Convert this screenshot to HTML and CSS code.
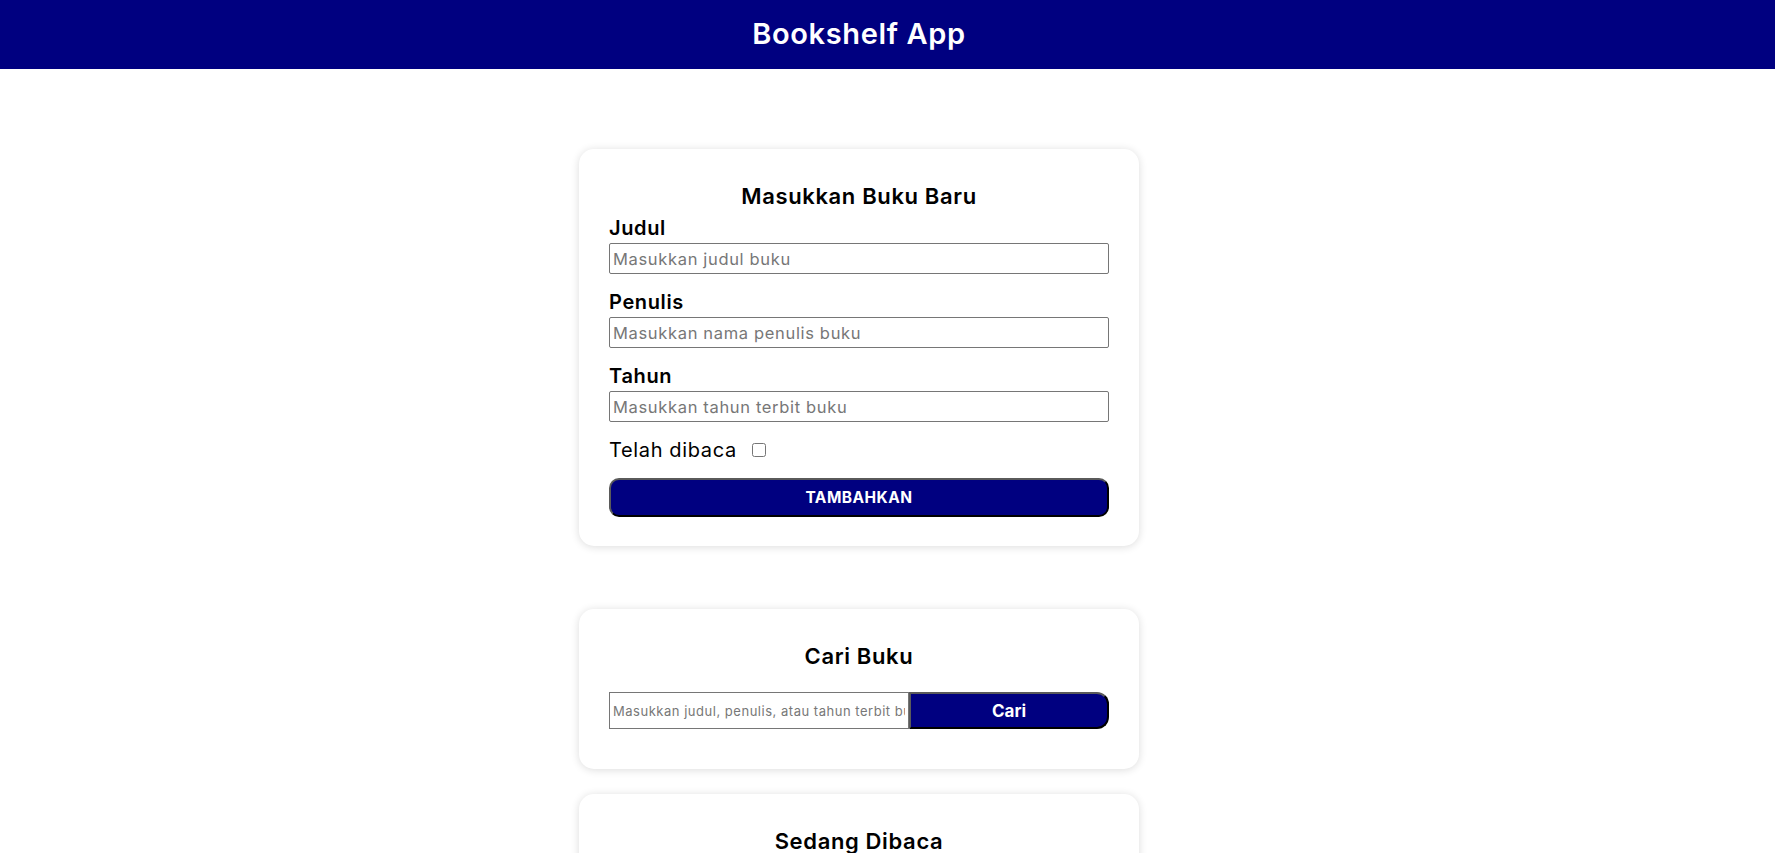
FILE: index.html
```html
<!DOCTYPE html>
<html lang="id">
<head>
<meta charset="UTF-8">
<meta name="viewport" content="width=device-width, initial-scale=1.0">
<title>Bookshelf App</title>
<link rel="stylesheet" href="styles.css">
</head>
<body>

<header class="app-header">
    <h1>Bookshelf App</h1>
</header>

<main class="app-main">
    <section class="card card-input">
        <h2 class="card-title">Masukkan Buku Baru</h2>
        <form class="book-form" id="inputBook">
            <div class="field">
                <label for="inputBookTitle">Judul</label>
                <input type="text" id="inputBookTitle" placeholder="Masukkan judul buku">
            </div>
            <div class="field">
                <label for="inputBookAuthor">Penulis</label>
                <input type="text" id="inputBookAuthor" placeholder="Masukkan nama penulis buku">
            </div>
            <div class="field">
                <label for="inputBookYear">Tahun</label>
                <input type="text" id="inputBookYear" placeholder="Masukkan tahun terbit buku">
            </div>
            <div class="field-check">
                <label for="inputBookIsComplete">Telah dibaca</label>
                <input type="checkbox" id="inputBookIsComplete">
            </div>
            <button type="submit" class="btn-submit">TAMBAHKAN</button>
        </form>
    </section>

    <section class="card card-search">
        <h2 class="card-title">Cari Buku</h2>
        <form class="search-form" id="searchBook">
            <input type="text" id="searchBookTitle" placeholder="Masukkan judul, penulis, atau tahun terbit buku">
            <button type="submit" class="btn-search">Cari</button>
        </form>
    </section>

    <section class="card card-shelf">
        <h2 class="card-title">Sedang Dibaca</h2>
        <div class="book-list" id="incompleteBookshelfList"></div>
    </section>
</main>

</body>
</html>
```

FILE: styles.css
```css
* {
    box-sizing: border-box;
}

body {
    margin: 0;
    font-family: Inter, "Open Sans", sans-serif;
    letter-spacing: 0.04em;
    color: #000;
    background-color: #fff;
}

.app-header {
    background-color: #000080;
    height: 69px;
    padding-right: 57px;
    text-align: center;
}

.app-header h1 {
    margin: 0;
    font-size: 29px;
    font-weight: 600;
    line-height: 67px;
    color: #fff;
}

.app-main {
    padding: 80px 57px 40px 0;
}

.card {
    width: 560px;
    margin: 0 auto;
    padding: 32px 30px 29px;
    background-color: #fff;
    border-radius: 15px;
    box-shadow: 0 1px 9px rgba(0, 0, 0, 0.14);
}

.card-search {
    margin-top: 63px;
    padding-bottom: 40px;
}

.card-shelf {
    margin-top: 25px;
    min-height: 200px;
}

.card-title {
    margin: 0 0 5px;
    font-size: 22px;
    font-weight: 600;
    line-height: 30px;
    text-align: center;
}

.book-form {
    display: flex;
    flex-direction: column;
    gap: 16px;
}

.field {
    display: flex;
    flex-direction: column;
    gap: 3px;
}

.field label {
    font-size: 20px;
    font-weight: 600;
    line-height: 24px;
}

input[type=text] {
    font-family: inherit;
    letter-spacing: 0.04em;
    border: 1px solid #767676;
    border-radius: 2px;
    padding: 1px 3px;
    color: #000;
}

.field input {
    height: 31px;
    font-size: 16.5px;
}

input::placeholder {
    color: #777;
}

.field-check {
    display: flex;
    align-items: center;
    gap: 15px;
    font-size: 20px;
    line-height: 24px;
}

.field-check input {
    margin: 0;
    width: 14px;
    height: 14px;
}

.btn-submit {
    height: 39px;
    font-family: inherit;
    font-size: 15.5px;
    font-weight: 700;
    letter-spacing: 0.03em;
    color: #fff;
    background-color: #000080;
    border: 2px solid;
    border-color: #5a5a5a #000 #000 #5a5a5a;
    border-radius: 10px;
    cursor: pointer;
}

.search-form {
    display: flex;
    height: 37px;
    margin-top: 21px;
}

.search-form input {
    width: 60%;
    font-size: 13px;
    border-radius: 0;
}

.btn-search {
    width: 40%;
    font-family: inherit;
    font-size: 17px;
    font-weight: 700;
    color: #fff;
    background-color: #000080;
    border: 2px solid;
    border-color: #5a5a5a #000 #000 #5a5a5a;
    border-radius: 0 12px 12px 0;
    cursor: pointer;
}
```
